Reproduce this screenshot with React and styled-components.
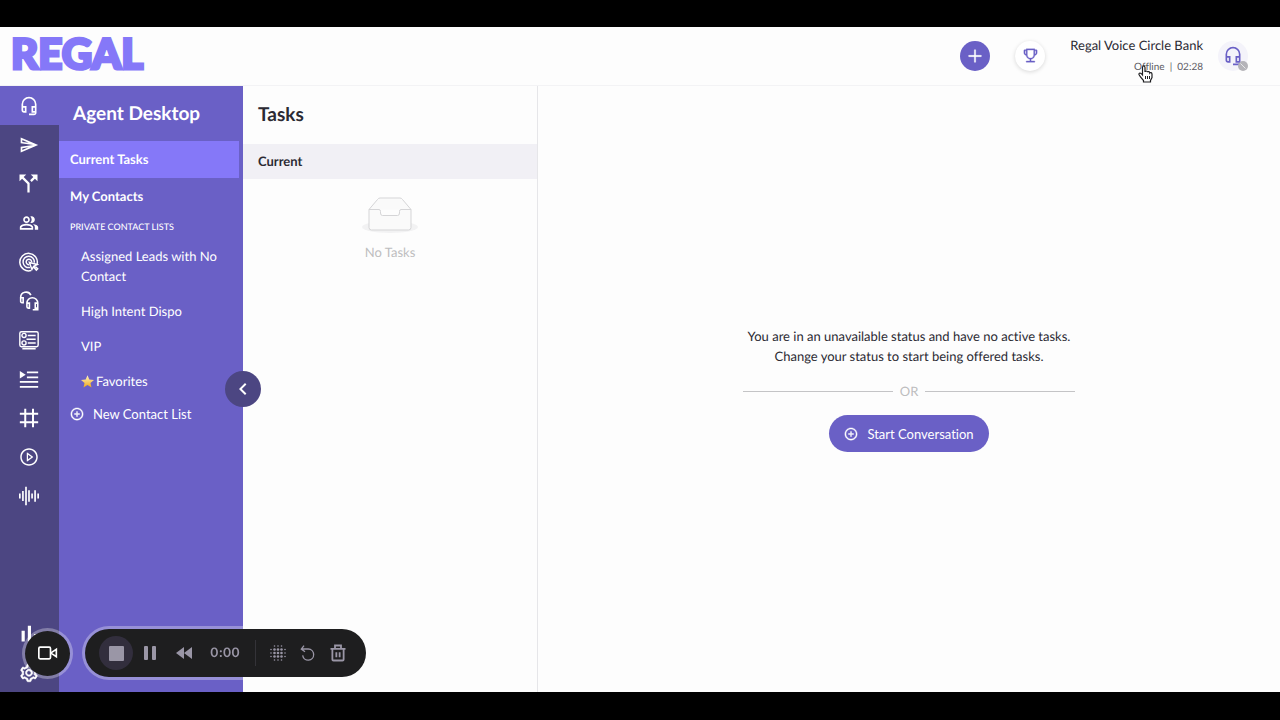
import React from 'react';
import styled, { createGlobalStyle } from 'styled-components';
import { AiOutlinePlus, AiOutlinePlusCircle, AiOutlineTrophy, AiOutlinePlayCircle, AiOutlineSetting } from 'react-icons/ai';
import { MdOutlineHeadsetMic, MdOutlineSend, MdCallSplit, MdOutlinePeopleAlt, MdChevronLeft } from 'react-icons/md';

const GlobalStyle = createGlobalStyle`
  * {
    box-sizing: border-box;
  }
  body {
    margin: 0;
    background: #000000;
    font-family: Lato, 'Liberation Sans', sans-serif;
    font-size: 13px;
    color: #2b2a33;
    text-rendering: geometricPrecision;
    font-variant-ligatures: none;
  }
  button {
    font: inherit;
    border: none;
    padding: 0;
    cursor: pointer;
  }
  a {
    color: inherit;
    text-decoration: none;
  }
  svg {
    display: block;
    flex: none;
  }
`;
const Screen = styled.div`
  display: flex;
  flex-direction: column;
  height: 100vh;
  padding: 27px 0 28px;
`;
const Header = styled.header`
  display: flex;
  align-items: center;
  justify-content: space-between;
  height: 59px;
  flex: none;
  padding: 0 32px 1px 11px;
  background: #fdfdfd;
  border-bottom: 1px solid #f3f3f5;
`;
const Logo = styled.a`
  && {
    color: #8578f8;
  }
  padding-bottom: 6px;
  font-size: 42px;
  line-height: 50px;
  font-weight: 900;
  -webkit-text-stroke: 3px #8578f8;
`;
const HeaderActions = styled.div`
  display: flex;
  align-items: center;
`;
const RoundButton = styled.button`
  display: flex;
  align-items: center;
  justify-content: center;
  width: 30px;
  height: 30px;
  margin-right: 25px;
  border-radius: 50%;
  color: ${props => props.$primary ? '#ffffff' : '#6a60c6'};
  background: ${props => props.$primary ? '#6a60c6' : '#ffffff'};
  box-shadow: ${props => props.$primary ? 'none' : '0 1px 4px #00000026'};

  svg {
    stroke: currentColor;
    stroke-width: 20px;
  }
`;
const Account = styled.div`
  position: relative;
  text-align: right;
  margin-right: 15px;
`;
const AccountName = styled.div`
  font-size: 13px;
  line-height: 20px;
`;
const Status = styled.div`
  padding-top: 2px;
  font-size: 10px;
  line-height: 20px;
  color: #5c5b63;
`;
const Pointer = styled.svg`
  position: absolute;
  left: 68px;
  top: 30px;
`;
const Avatar = styled.button`
  position: relative;
  display: flex;
  align-items: center;
  justify-content: center;
  width: 30px;
  height: 30px;
  border-radius: 50%;
  background: #f4f3fa;
  color: #6a60c6;
`;
const StatusBadge = styled.svg`
  position: absolute;
  right: 0;
  bottom: 0;
`;
const Body = styled.div`
  display: flex;
  flex: 1;
  min-height: 0;
`;
const Rail = styled.nav`
  display: flex;
  flex-direction: column;
  width: 59px;
  flex: none;
  background: #4c4682;
  color: #ffffff;
`;
const RailLink = styled.a`
  display: flex;
  align-items: center;
  justify-content: center;
  height: 39px;
  padding: 0 2px 0 0;
  background: ${props => props.$active ? '#6a60c6' : 'transparent'};
`;
const RailSpacer = styled.div`
  flex: 1;
`;
const Sidebar = styled.aside`
  position: relative;
  width: 184px;
  flex: none;
  background: #6a60c6;
  color: #ffffff;
`;
const SidebarTitle = styled.h1`
  margin: 0;
  padding: 0 14px;
  font-size: 19px;
  line-height: 55px;
  font-weight: 700;
`;
const SidebarLink = styled.a`
  display: block;
  margin-right: 4px;
  padding-left: 11px;
  font-size: 13px;
  line-height: 37px;
  font-weight: 700;
  background: ${props => props.$active ? '#8578f8' : 'transparent'};
`;
const ListHeading = styled.h2`
  margin: 0;
  padding: 0 11px;
  font-size: 9px;
  line-height: 24px;
  font-weight: 500;
`;
const Lists = styled.ul`
  list-style: none;
  margin: 0;
  padding: 0 22px;
`;
const ListItem = styled.li`
  padding: 7px 0 8px;
  line-height: 20px;

  a {
    display: flex;
    align-items: center;
    gap: 2px;
  }
`;
const NewList = styled.button`
  display: flex;
  align-items: center;
  gap: 9px;
  padding: 0 11px;
  line-height: 30px;
  color: #ffffff;
  background: none;
`;
const PlusCircle = styled(AiOutlinePlusCircle)`
  stroke: currentColor;
  stroke-width: 30px;
`;
const CollapseButton = styled.button`
  position: absolute;
  right: -18px;
  top: 285px;
  display: flex;
  align-items: center;
  justify-content: center;
  width: 36px;
  height: 36px;
  border-radius: 50%;
  background: #4c4682;
  color: #ffffff;
`;
const TaskPanel = styled.section`
  width: 295px;
  flex: none;
  background: #fdfdfd;
  border-right: 1px solid #e6e6e9;
`;
const PanelTitle = styled.h2`
  margin: 0;
  padding: 0 15px;
  font-size: 19px;
  line-height: 58px;
  font-weight: 700;
`;
const GroupTitle = styled.h3`
  margin: 0;
  padding: 0 15px;
  font-size: 13px;
  line-height: 35px;
  font-weight: 700;
  background: #f1f0f5;
`;
const Empty = styled.div`
  display: flex;
  flex-direction: column;
  align-items: center;
  gap: 8px;
  padding-top: 17px;
  line-height: 20px;
  color: #bdbdbf;
`;
const Main = styled.main`
  display: flex;
  flex-direction: column;
  align-items: center;
  justify-content: center;
  flex: 1;
  background: #fdfdfd;
`;
const Message = styled.p`
  margin: 0;
  line-height: 20px;
  text-align: center;
`;
const Divider = styled.div`
  display: flex;
  align-items: center;
  gap: 7px;
  width: 332px;
  margin: 15px 0 14px;
  line-height: 20px;
  color: #bdbdbf;

  &::before,
  &::after {
    content: '';
    flex: 1;
    height: 1px;
    background: #c4c4c6;
  }
`;
const StartButton = styled.button`
  display: flex;
  align-items: center;
  gap: 9px;
  height: 37px;
  padding: 0 15px;
  border-radius: 19px;
  background: #6a60c6;
  color: #ffffff;
`;
const Recorder = styled.div`
  position: fixed;
  left: 25px;
  bottom: 43px;
  display: flex;
  align-items: center;
  gap: 15px;
`;
const CameraButton = styled.button`
  display: flex;
  align-items: center;
  justify-content: center;
  width: 45px;
  height: 45px;
  border-radius: 50%;
  background: #1e1e1f;
  color: #ffffff;
  box-shadow: 0 0 0 3px #ffffff4d;
`;
const RecorderBar = styled.div`
  display: flex;
  align-items: center;
  height: 48px;
  width: 281px;
  padding-left: 14px;
  border-radius: 24px;
  background: #1e1e1f;
  color: #9a96a6;
  box-shadow: 0 0 0 3px #ffffff4d;
`;
const RecorderButton = styled.button`
  display: flex;
  align-items: center;
  justify-content: center;
  width: ${props => props.$wide ? '34px' : '30px'};
  height: 34px;
  border-radius: 50%;
  background: ${props => props.$filled ? '#322e3d' : 'none'};
  color: #9a96a6;
`;
const Timer = styled.time`
  width: 48px;
  text-align: center;
  font-family: Inter, 'Liberation Sans', sans-serif;
  font-size: 13px;
  font-weight: 600;
`;
const BarLine = styled.span`
  width: 1px;
  height: 26px;
  margin: 0 7px 0 6px;
  background: #343338;
`;

const Line = ({ size = 20, width = 2, children }) => (
  <svg width={size} height={size} viewBox="0 0 24 24" fill="none" stroke="currentColor" strokeWidth={width} aria-hidden="true">
    {children}
  </svg>
);

const TargetIcon = () => (
  <Line width={1.8}>
    <path d="M21.600 15A10.500 10.500 0 1 0 14.500 22.200" />
    <path d="M18.400 12.800a6.800 6.800 0 1 0-5.200 5.700" />
    <path d="M15.200 12a3.300 3.300 0 1 0-3 3.200" />
    <path d="M12.500 12.500l3 8.500 1.800-3.300 3.500 4 1.600-1.600-3.700-3.500 3.300-1.600z" />
  </Line>
);

const HeadsetsIcon = () => (
  <Line width={1.9}>
    <path d="M2 10V8a6.500 6.500 0 0 1 12.300-3M2 8h3v6H3.500A1.500 1.500 0 0 1 2 12.500z" />
    <path d="M9.500 16v-1.500a6.500 6.500 0 0 1 13 0v8h-6M9.500 14.500h3v6H11A1.500 1.500 0 0 1 9.500 19zM22.500 14.500h-3v6h3" />
  </Line>
);

const ListIcon = () => (
  <Line width={1.7}>
    <rect x="1" y="2" width="22" height="18" rx="2" />
    <path d="M4 22.500h16M9 11h11M10.500 6.500H20M10.500 15.500H20" />
    <circle cx="6" cy="6.500" r="2.500" />
    <circle cx="6" cy="15.500" r="2.500" />
  </Line>
);

const QueueIcon = () => (
  <Line>
    <path d="M9.500 4H23M9.500 10H23M1 15.500h22M1 21.500h22" />
    <path d="M1 2.500v9l7-4.500z" fill="currentColor" stroke="none" />
  </Line>
);

const HashIcon = () => (
  <Line width={2.4}>
    <path d="M7.500 1v22M16.800 1v22M1 7h22M1 17h22" />
  </Line>
);

const WaveIcon = () => (
  <Line>
    <path d="M1 9v6M4.700 6v12M8.400 1v22M12 5v14M15.700 9v6M19.300 5v14M23 9v6" />
  </Line>
);

const ChartIcon = () => (
  <Line width={3.8}>
    <path d="M5 8v13M12.500 2v19M20 12v9" />
  </Line>
);

const StarIcon = () => (
  <svg width="13" height="13" viewBox="0 0 24 24" aria-hidden="true">
    <defs>
      <linearGradient id="star" x1="0" y1="0" x2="0" y2="1">
        <stop offset="0" stopColor="#fff6c0" />
        <stop offset="1" stopColor="#eea61c" />
      </linearGradient>
    </defs>
    <path fill="url(#star)" d="M12 .5l3.400 7.600 8.600.9-6.500 5.600 1.900 8.400-7.400-4.400L4.600 23l1.900-8.400L0 9l8.600-.9z" />
  </svg>
);

const EmptyIcon = () => (
  <svg width="58" height="38" viewBox="0 0 58 38" aria-hidden="true">
    <ellipse cx="29" cy="31" rx="28" ry="6" fill="#f2f2f3" />
    <g stroke="#d5d5d7" fill="#fafafa">
      <path d="M50 13.500L41.500 3.500Q40.500 2 39 2H19Q17.500 2 16.500 3.500L8 13.500" />
      <path d="M8 13.500h10q1.500 0 1.500 2v1.500q0 2.500 2 2.500h15q2 0 2-2.500v-1.500q0-2 1.500-2h10v18q0 2.500-2.500 2.500h-37Q8 34 8 31.500z" />
    </g>
  </svg>
);

const PointerHand = () => (
  <Pointer width="15" height="18" viewBox="0 0 15 18" aria-hidden="true">
    <path
      d="M4.500 9.500V2.500Q4.500 1 5.700 1T7 2.500V7Q7 6 8.200 6T9.500 7.200Q9.700 6.500 10.700 6.600T11.800 8Q12.200 7.400 13 7.600T14 9v3.500l-1.500 3v1.500h-7v-1.500L2.500 12 1 9.500Q.7 8.200 2 8q1 0 2.500 2z"
      fill="#ffffff"
      stroke="#1f1f22"
      strokeWidth="1.200"
    />
    <path d="M7.500 11v3M9.500 11v3M11.500 11v3" stroke="#1f1f22" />
  </Pointer>
);

const DotsIcon = () => {
  const points = [];
  for (let y = 0; y < 5; y++) {
    for (let x = 0; x < 5; x++) {
      const corner = (x === 0 || x === 4) && (y === 0 || y === 4);
      if (!corner) {
        const inner = x > 0 && x < 4 && y > 0 && y < 4;
        points.push(<circle key={`${x}-${y}`} cx={1 + x * 3.5} cy={1 + y * 3.5} r={inner ? 1.3 : 0.8} />);
      }
    }
  }
  return <svg width="16" height="16" viewBox="0 0 16 16" fill="currentColor" aria-hidden="true">{points}</svg>;
};

const railItems = [
  { label: 'Agent Desktop', icon: <MdOutlineHeadsetMic size={20} />, active: true },
  { label: 'Campaigns', icon: <MdOutlineSend size={20} /> },
  { label: 'Journeys', icon: <MdCallSplit size={27} /> },
  { label: 'Contacts', icon: <MdOutlinePeopleAlt size={20} /> },
  { label: 'Segments', icon: <TargetIcon /> },
  { label: 'Agents', icon: <HeadsetsIcon /> },
  { label: 'Forms', icon: <ListIcon /> },
  { label: 'Queues', icon: <QueueIcon /> },
  { label: 'Numbers', icon: <HashIcon /> },
  { label: 'Recordings', icon: <AiOutlinePlayCircle size={20} /> },
  { label: 'Audio', icon: <WaveIcon /> },
];

function App(){
    return (
        <Screen>
            <GlobalStyle />
            <Header>
                <Logo href="#">REGAL</Logo>
                <HeaderActions>
                    <RoundButton $primary aria-label="Add"><AiOutlinePlus size={18} /></RoundButton>
                    <RoundButton aria-label="Leaderboard"><AiOutlineTrophy size={17} /></RoundButton>
                    <Account>
                        <AccountName>Regal Voice Circle Bank</AccountName>
                        <Status>Offline &nbsp;|&nbsp; 02:28</Status>
                        <PointerHand />
                    </Account>
                    <Avatar aria-label="Status">
                        <MdOutlineHeadsetMic size={20} />
                        <StatusBadge width="10" height="10" viewBox="0 0 10 10">
                            <circle cx="5" cy="5" r="5" fill="#b5b4b9" />
                            <path d="M2.500 2.500l5 5" stroke="#e8e8ea" />
                        </StatusBadge>
                    </Avatar>
                </HeaderActions>
            </Header>
            <Body>
                <Rail>
                    {railItems.map(item => (
                        <RailLink key={item.label} href="#" aria-label={item.label} $active={item.active}>{item.icon}</RailLink>
                    ))}
                    <RailSpacer />
                    <RailLink href="#" aria-label="Reports"><ChartIcon /></RailLink>
                    <RailLink href="#" aria-label="Settings"><AiOutlineSetting size={20} stroke="currentColor" strokeWidth={35} /></RailLink>
                </Rail>
                <Sidebar>
                    <SidebarTitle>Agent Desktop</SidebarTitle>
                    <SidebarLink href="#" $active>Current Tasks</SidebarLink>
                    <SidebarLink href="#">My Contacts</SidebarLink>
                    <ListHeading>PRIVATE CONTACT LISTS</ListHeading>
                    <Lists>
                        <ListItem><a href="#">Assigned Leads with No Contact</a></ListItem>
                        <ListItem><a href="#">High Intent Dispo</a></ListItem>
                        <ListItem><a href="#">VIP</a></ListItem>
                        <ListItem><a href="#"><StarIcon />Favorites</a></ListItem>
                    </Lists>
                    <NewList><PlusCircle size={14} />New Contact List</NewList>
                    <CollapseButton aria-label="Collapse menu"><MdChevronLeft size={24} /></CollapseButton>
                </Sidebar>
                <TaskPanel>
                    <PanelTitle>Tasks</PanelTitle>
                    <GroupTitle>Current</GroupTitle>
                    <Empty>
                        <EmptyIcon />
                        No Tasks
                    </Empty>
                </TaskPanel>
                <Main>
                    <Message>
                        You are in an unavailable status and have no active tasks.<br />
                        Change your status to start being offered tasks.
                    </Message>
                    <Divider>OR</Divider>
                    <StartButton><PlusCircle size={14} />Start Conversation</StartButton>
                </Main>
            </Body>
            <Recorder>
                <CameraButton aria-label="Camera">
                    <Line size={20}>
                        <rect x="1" y="5" width="14" height="14" rx="1.500" />
                        <path d="M16 11.500l6-4v9L16 12.500z" />
                    </Line>
                </CameraButton>
                <RecorderBar>
                    <RecorderButton $wide $filled aria-label="Stop">
                        <svg width="15" height="15" viewBox="0 0 15 15"><rect width="15" height="15" rx="1" fill="currentColor" /></svg>
                    </RecorderButton>
                    <RecorderButton $wide aria-label="Pause">
                        <svg width="12" height="14" viewBox="0 0 12 14" fill="currentColor"><rect width="4" height="14" rx="1" /><rect x="8" width="4" height="14" rx="1" /></svg>
                    </RecorderButton>
                    <RecorderButton $wide aria-label="Rewind">
                        <svg width="16" height="12" viewBox="0 0 16 12" fill="currentColor"><path d="M0 6L8 0v12zM8 6l8-6v12z" /></svg>
                    </RecorderButton>
                    <Timer>0:00</Timer>
                    <BarLine />
                    <RecorderButton aria-label="Effects"><DotsIcon /></RecorderButton>
                    <RecorderButton aria-label="Restart">
                        <Line size={16}><path d="M6 1L2 6l5.500 4M2 6h10.500a8.300 8.300 0 1 1-8.500 9.500" /></Line>
                    </RecorderButton>
                    <RecorderButton aria-label="Delete">
                        <Line size={18} width={2.4}>
                            <path d="M2 6.500h20M8 6V2h8v4M4.500 6v14.500q0 1.500 1.500 1.500h12q1.500 0 1.500-1.500V6M9.800 11v6.500M14.200 11v6.500" />
                        </Line>
                    </RecorderButton>
                </RecorderBar>
            </Recorder>
        </Screen>
    )
}

export default App;
